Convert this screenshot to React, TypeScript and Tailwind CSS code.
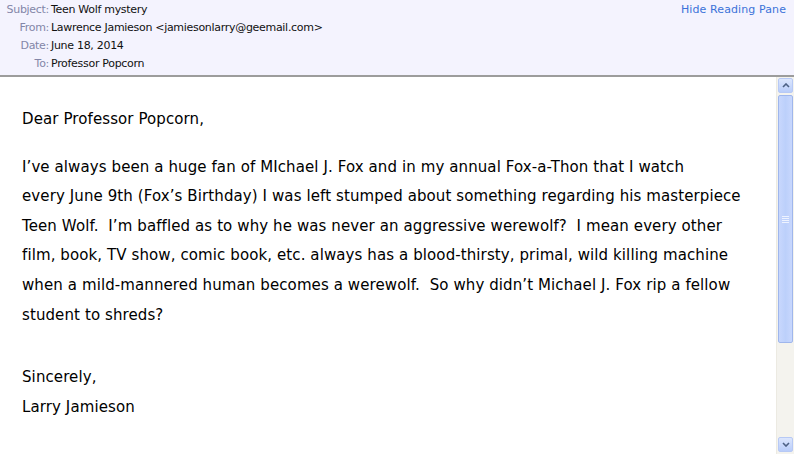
const headerRows = [
  { label: "Subject:", value: "Teen Wolf mystery" },
  { label: "From:", value: "Lawrence Jamieson <jamiesonlarry@geemail.com>" },
  { label: "Date:", value: "June 18, 2014" },
  { label: "To:", value: "Professor Popcorn" },
];

const bodyLines = [
  "I\u2019ve always been a huge fan of MIchael J. Fox and in my annual Fox-a-Thon that I watch",
  "every June 9th (Fox\u2019s Birthday) I was left stumped about something regarding his masterpiece",
  "Teen Wolf.  I\u2019m baffled as to why he was never an aggressive werewolf?  I mean every other",
  "film, book, TV show, comic book, etc. always has a blood-thirsty, primal, wild killing machine",
  "when a mild-mannered human becomes a werewolf.  So why didn\u2019t Michael J. Fox rip a fellow",
  "student to shreds?",
];

const ScrollBar = () => {
  return (
    <div className="w-[18px] shrink-0 bg-[#f4f3ee] border-l border-[#eceae2] flex flex-col items-center pt-[1px] pb-[2px]">
      {/* up arrow */}
      <div className="w-[15px] h-[15px] rounded-[2px] border border-[#b7c9f5] bg-gradient-to-b from-[#dce6fd] to-[#b9cdfa] flex items-center justify-center">
        <svg width="8" height="5" viewBox="0 0 8 5">
          <path d="M1 4 L4 1 L7 4" stroke="#4d6185" strokeWidth="1.6" fill="none" />
        </svg>
      </div>
      {/* thumb */}
      <div className="mt-[2px] w-[15px] h-[248px] rounded-[2px] border border-[#9fb6ec] bg-gradient-to-r from-[#c8d7fd] via-[#bcd0fb] to-[#c8d7fd] flex items-center justify-center">
        <div className="flex flex-col gap-[1px]">
          <div className="w-[7px] h-[1px] bg-[#eef3ff]" />
          <div className="w-[7px] h-[1px] bg-[#eef3ff]" />
          <div className="w-[7px] h-[1px] bg-[#eef3ff]" />
          <div className="w-[7px] h-[1px] bg-[#eef3ff]" />
        </div>
      </div>
      <div className="flex-1" />
      {/* down arrow */}
      <div className="w-[15px] h-[15px] rounded-[2px] border border-[#b7c9f5] bg-gradient-to-b from-[#dce6fd] to-[#b9cdfa] flex items-center justify-center">
        <svg width="8" height="5" viewBox="0 0 8 5">
          <path d="M1 1 L4 4 L7 1" stroke="#4d6185" strokeWidth="1.6" fill="none" />
        </svg>
      </div>
    </div>
  );
};

export default function App() {
  return (
    <div className="w-[794px] h-[454px] flex flex-col bg-white overflow-hidden">
      {/* message header */}
      <div className="h-[77px] shrink-0 bg-[#f4f3fe] border-b-2 border-[#9c9c9c] flex justify-between pt-[1px] font-['DejaVu_Sans',sans-serif] text-[11px] tracking-[-0.3px]">
        <div className="flex flex-col">
          {headerRows.map((row) => (
            <div key={row.label} className="flex h-[18px] items-center">
              <span className="w-[49px] text-right text-[#8386a8]">{row.label}</span>
              <span className="ml-[2px] text-[#111]">{row.value}</span>
            </div>
          ))}
        </div>
        <div className="h-[18px] flex items-center pr-[8px] text-[#3b72d9] tracking-[0.1px]">Hide Reading Pane</div>
      </div>

      {/* message body */}
      <div className="flex-1 flex min-h-0">
        <div className="flex-1 pl-[22px] pt-[28px] font-['DejaVu_Sans',sans-serif] text-[15px] tracking-[0.1px] text-black leading-[29.6px] whitespace-pre">
          <p>Dear Professor Popcorn,</p>
          <p className="mt-[18px]">
            {bodyLines.map((line) => (
              <span key={line} className="block">{line}</span>
            ))}
          </p>
          <p className="mt-[33px]">Sincerely,</p>
          <p>Larry Jamieson</p>
        </div>
        <ScrollBar />
      </div>
    </div>
  );
}
